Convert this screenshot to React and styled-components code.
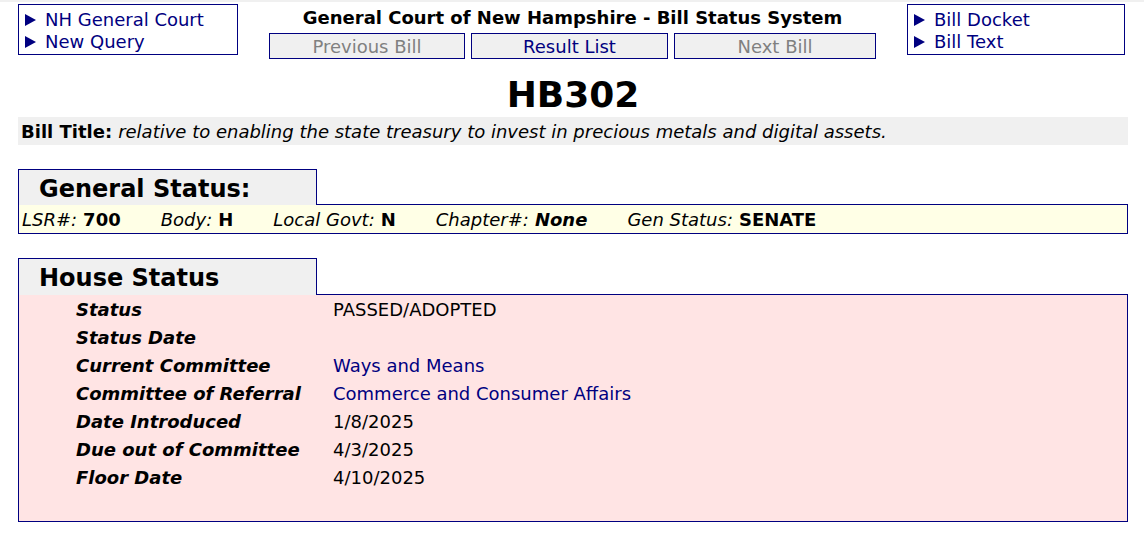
import { Fragment } from "react";
import styled, { createGlobalStyle } from "styled-components";

const GlobalStyle = createGlobalStyle`
  body {
    margin: 0;
    font-family: "DejaVu Sans", Verdana, sans-serif;
    color: #000;
    background: #fff;
  }
`;

const Page = styled.div`
  border-top: 2px solid #f0f0f0;
  padding: 2px 16px 20px 18px;
`;

const Header = styled.div`
  display: flex;
  justify-content: space-between;
  align-items: flex-start;
  padding-right: 3px;
`;

const LinkBox = styled.div`
  width: ${props => props.width}px;
  height: 51px;
  border: 1px solid #000080;
  padding: 2px 0 0 6px;
  box-sizing: border-box;
  display: flex;
  flex-direction: column;
  justify-content: center;
`;

const NavLink = styled.a`
  display: flex;
  align-items: center;
  gap: 9px;
  font-size: 18px;
  line-height: 22px;
  color: #000080;
  text-decoration: none;
`;

const Center = styled.div`
  flex: 1;
  display: flex;
  flex-direction: column;
  align-items: center;
`;

const SiteTitle = styled.div`
  font-size: 18px;
  font-weight: bold;
  line-height: 24px;
  margin-top: 2px;
`;

const ButtonRow = styled.div`
  display: flex;
  gap: 6px;
  margin-top: 3px;
`;

const NavButton = styled.button`
  width: ${props => props.width}px;
  height: 26px;
  background: #f0f0f0;
  border: 1px solid #000080;
  font-family: inherit;
  font-size: 18px;
  color: ${props => (props.disabled ? "#808080" : "#000080")};
  padding: 0;
`;

const BillNumber = styled.h1`
  margin: 15px 0 0;
  text-align: center;
  font-size: 36px;
  line-height: 42px;
`;

const TitleBar = styled.div`
  margin-top: 1px;
  background: #f0f0f0;
  padding: 0 3px;
  height: 28px;
  display: flex;
  align-items: center;
  font-size: 18px;
  em {
    margin-left: 6px;
  }
`;

const Section = styled.div`
  margin-top: ${props => props.top}px;
`;

const Tab = styled.div`
  position: relative;
  z-index: 1;
  width: 277px;
  height: ${props => props.h}px;
  margin-bottom: -1px;
  border: 1px solid #000080;
  border-bottom: none;
  background: #f0f0f0;
  padding-left: 20px;
  font-size: 24px;
  font-weight: bold;
  line-height: 38px;
`;

const GeneralBox = styled.div`
  border: 1px solid #000080;
  background: #ffffe6;
  height: 28px;
  display: flex;
  align-items: center;
  gap: 40px;
  padding-left: 3px;
  font-size: 18px;
`;

const Field = styled.span`
  em {
    margin-right: 6px;
  }
`;

const HouseBox = styled.div`
  border: 1px solid #000080;
  background: #ffe4e4;
  padding: 0 0 30px 57px;
  display: grid;
  grid-template-columns: 257px 1fr;
  grid-auto-rows: 28px;
  align-items: center;
  font-size: 18px;
`;

const Label = styled.div`
  font-weight: bold;
  font-style: italic;
`;

const Value = styled.div`
  color: ${props => (props.$link ? "#000080" : "#000")};
`;

const Arrow = () => (
  <svg width="11" height="12" viewBox="0 0 11 12">
    <polygon points="0,0 11,6 0,12" fill="#000080" />
  </svg>
);

const houseRows = [
  ["Status", "PASSED/ADOPTED"],
  ["Status Date", ""],
  ["Current Committee", "Ways and Means", true],
  ["Committee of Referral", "Commerce and Consumer Affairs", true],
  ["Date Introduced", "1/8/2025"],
  ["Due out of Committee", "4/3/2025"],
  ["Floor Date", "4/10/2025"],
];

export default function App() {
  return (
    <Page>
      <GlobalStyle />
      <Header>
        <LinkBox width={220}>
          <NavLink href="#"><Arrow />NH General Court</NavLink>
          <NavLink href="#"><Arrow />New Query</NavLink>
        </LinkBox>
        <Center>
          <SiteTitle>General Court of New Hampshire - Bill Status System</SiteTitle>
          <ButtonRow>
            <NavButton width={196} disabled>Previous Bill</NavButton>
            <NavButton width={197}>Result List</NavButton>
            <NavButton width={202} disabled>Next Bill</NavButton>
          </ButtonRow>
        </Center>
        <LinkBox width={218}>
          <NavLink href="#"><Arrow />Bill Docket</NavLink>
          <NavLink href="#"><Arrow />Bill Text</NavLink>
        </LinkBox>
      </Header>

      <BillNumber>HB302</BillNumber>

      <TitleBar>
        <b>Bill Title:</b>
        <em>relative to enabling the state treasury to invest in precious metals and digital assets.</em>
      </TitleBar>

      <Section top={24}>
        <Tab h={35}>General Status:</Tab>
        <GeneralBox>
          <Field><em>LSR#:</em><b>700</b></Field>
          <Field><em>Body:</em><b>H</b></Field>
          <Field><em>Local Govt:</em><b>N</b></Field>
          <Field><em>Chapter#:</em><b><i>None</i></b></Field>
          <Field><em>Gen Status:</em><b>SENATE</b></Field>
        </GeneralBox>
      </Section>

      <Section top={24}>
        <Tab h={36}>House Status</Tab>
        <HouseBox>
          {houseRows.map(([label, value, link]) => (
            <Fragment key={label}>
              <Label>{label}</Label>
              <Value $link={link}>{value}</Value>
            </Fragment>
          ))}
        </HouseBox>
      </Section>
    </Page>
  );
}
